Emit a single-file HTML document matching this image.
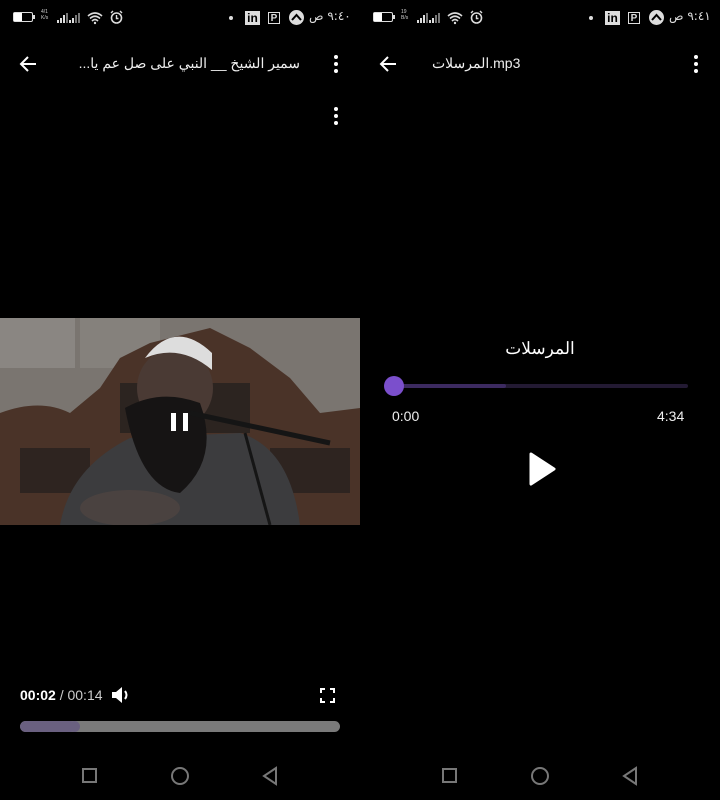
<!DOCTYPE html>
<html><head><meta charset="utf-8">
<style>
*{margin:0;padding:0;box-sizing:border-box}
body{width:720px;height:800px;background:#000;position:relative;overflow:hidden;font-family:"Liberation Sans","Noto Sans CJK SC",sans-serif;color:#fff}
.a{position:absolute}
.half{position:absolute;top:0;width:360px;height:800px}
.clk{font-size:12px;color:#ddd;font-family:'DejaVu Sans',sans-serif;direction:ltr;unicode-bidi:isolate}
.clk span{display:inline-block}
</style></head><body>

<!-- LEFT -->
<div class="half" style="left:0">
  <div class="a" style="left:13px;top:12px;width:20px;height:10px;border:1.5px solid #ddd;border-radius:2px"><div style="width:8px;height:100%;background:#fff"></div></div>
  <div class="a" style="left:33px;top:15px;width:2px;height:4px;background:#ddd"></div>
  <div class="a" style="left:41px;top:9px;font-size:5px;color:#ccc;line-height:6px">4/1<br>K/s</div>
  <svg class="a" style="left:57px;top:11px" width="50" height="14"><g fill="#ddd"><rect x="0" y="9" width="2" height="3"/><rect x="3" y="7" width="2" height="5"/><rect x="6" y="4" width="2" height="8"/><rect x="9" y="2" width="2" height="10" fill="#777"/><rect x="12" y="9" width="2" height="3"/><rect x="15" y="7" width="2" height="5"/><rect x="18" y="4" width="2" height="8" fill="#777"/><rect x="21" y="2" width="2" height="10" fill="#777"/></g>
  <path d="M31 5 Q38 -1 45 5 M33 7.5 Q38 3 43 7.5 M35 10 Q38 7 41 10" stroke="#ddd" stroke-width="1.6" fill="none"/><circle cx="38" cy="12" r="1.2" fill="#ddd"/></svg>
  <svg class="a" style="left:109px;top:10px" width="15" height="15"><circle cx="7.5" cy="8" r="5" stroke="#ddd" stroke-width="1.6" fill="none"/><path d="M7.5 5v3.5h2M2 3l2-2M13 3l-2-2" stroke="#ddd" stroke-width="1.4" fill="none"/></svg>
  <div class="a" style="left:229px;top:16px;width:4px;height:4px;border-radius:50%;background:#ddd"></div>
  <div class="a" style="left:245px;top:11px;width:15px;height:14px;background:#ddd;color:#000;font-weight:bold;font-size:12px;line-height:14px;text-align:center">in</div>
  <div class="a" style="left:268px;top:12px;width:12px;height:12px;border:1px solid #ddd;background:#000;font-size:10px;font-weight:bold;line-height:11px;text-align:center;color:#ddd">P</div>
  <div class="a" style="left:289px;top:10px;width:15px;height:15px;border-radius:50%;background:#ddd"><svg width="15" height="15"><path d="M3 10 L7.5 5 L12 10" stroke="#000" stroke-width="2" fill="none"/></svg></div>
  <div class="a clk" style="left:309px;top:9px"><span>ص</span> <span>٩:٤٠</span></div>
  <svg class="a" style="left:18px;top:54px" width="20" height="20"><path d="M18 10H3M10 3L3 10l7 7" stroke="#fff" stroke-width="2" fill="none"/></svg>
  <div class="a" style="left:50px;top:55px;font-size:14px;direction:rtl;width:250px;text-align:right;color:#eee">سمير الشيخ __ النبي على صل عم يا...</div>
  <svg class="a" style="left:332px;top:54px" width="8" height="20"><circle cx="4" cy="3" r="2" fill="#fff"/><circle cx="4" cy="10" r="2" fill="#fff"/><circle cx="4" cy="17" r="2" fill="#fff"/></svg>
  <svg class="a" style="left:332px;top:106px" width="8" height="20"><circle cx="4" cy="3" r="2" fill="#fff"/><circle cx="4" cy="10" r="2" fill="#fff"/><circle cx="4" cy="17" r="2" fill="#fff"/></svg>
  <svg class="a" style="left:0;top:318px" width="360" height="207">
    <rect width="360" height="207" fill="#7a7570"/>
    <rect x="0" y="0" width="75" height="50" fill="#8a8682"/>
    <rect x="80" y="0" width="80" height="50" fill="#85817c"/>
    <path d="M0 95 Q40 80 70 95 L100 70 L120 40 L150 25 L210 10 L250 30 L290 60 L320 95 L360 90 L360 207 L0 207Z" fill="#4a3328"/>
    <rect x="20" y="130" width="70" height="45" fill="#2e2420"/>
    <rect x="270" y="130" width="80" height="45" fill="#2e2420"/>
    <rect x="120" y="65" width="130" height="50" fill="#2c2420"/>
    <path d="M60 207 Q70 150 130 120 L240 115 Q290 130 300 207Z" fill="#3c3c3e"/>
    <ellipse cx="175" cy="70" rx="38" ry="40" fill="#4a3a34"/>
    <path d="M145 40 Q175 0 212 35 L212 52 Q180 25 145 40Z" fill="#ddd"/>
    <path d="M125 90 Q160 70 200 85 Q220 140 180 175 Q140 170 125 90Z" fill="#161414"/>
    <ellipse cx="130" cy="190" rx="50" ry="18" fill="#4a4240"/>
    <path d="M190 95 L330 125" stroke="#151515" stroke-width="5"/>
    <path d="M245 115 L270 207" stroke="#151515" stroke-width="3"/>
    <rect x="171" y="95" width="5" height="18" fill="#fff"/><rect x="183" y="95" width="5" height="18" fill="#fff"/>
  </svg>
  <div class="a" style="left:20px;top:687px;font-size:14px"><b>00:02</b> <span style="color:#ccc">/ 00:14</span></div>
  <svg class="a" style="left:111px;top:685px" width="22" height="20"><path d="M1 7h4l6-5v16l-6-5H1z" fill="#fff"/><path d="M14 6q3 4 0 8" stroke="#fff" stroke-width="2" fill="none"/></svg>
  <svg class="a" style="left:320px;top:688px" width="15" height="15"><path d="M1 5V1h4M10 1h4v4M14 10v4h-4M5 14H1v-4" stroke="#fff" stroke-width="2" fill="none"/></svg>
  <div class="a" style="left:20px;top:721px;width:320px;height:11px;border-radius:6px;background:#7a7a7a;overflow:hidden"><div style="width:56px;height:100%;background:#6a6080;border-radius:6px"></div></div>
  <div class="a" style="left:69px;top:721px;width:11px;height:11px;border-radius:50%;background:#6a6080"></div>
  <div class="a" style="left:82px;top:768px;width:15px;height:15px;border:2px solid #777"></div>
  <div class="a" style="left:171px;top:767px;width:18px;height:18px;border:2px solid #777;border-radius:50%"></div>
  <svg class="a" style="left:262px;top:766px" width="16" height="20"><path d="M14 2L2 10l12 8z" stroke="#777" stroke-width="2" fill="none"/></svg>
</div>

<!-- RIGHT -->
<div class="half" style="left:360px">
  <div class="a" style="left:13px;top:12px;width:20px;height:10px;border:1.5px solid #ddd;border-radius:2px"><div style="width:8px;height:100%;background:#fff"></div></div>
  <div class="a" style="left:33px;top:15px;width:2px;height:4px;background:#ddd"></div>
  <div class="a" style="left:41px;top:9px;font-size:5px;color:#ccc;line-height:6px">19<br>B/s</div>
  <svg class="a" style="left:57px;top:11px" width="50" height="14"><g fill="#ddd"><rect x="0" y="9" width="2" height="3"/><rect x="3" y="7" width="2" height="5"/><rect x="6" y="4" width="2" height="8"/><rect x="9" y="2" width="2" height="10" fill="#777"/><rect x="12" y="9" width="2" height="3"/><rect x="15" y="7" width="2" height="5"/><rect x="18" y="4" width="2" height="8" fill="#777"/><rect x="21" y="2" width="2" height="10" fill="#777"/></g>
  <path d="M31 5 Q38 -1 45 5 M33 7.5 Q38 3 43 7.5 M35 10 Q38 7 41 10" stroke="#ddd" stroke-width="1.6" fill="none"/><circle cx="38" cy="12" r="1.2" fill="#ddd"/></svg>
  <svg class="a" style="left:109px;top:10px" width="15" height="15"><circle cx="7.5" cy="8" r="5" stroke="#ddd" stroke-width="1.6" fill="none"/><path d="M7.5 5v3.5h2M2 3l2-2M13 3l-2-2" stroke="#ddd" stroke-width="1.4" fill="none"/></svg>
  <div class="a" style="left:229px;top:16px;width:4px;height:4px;border-radius:50%;background:#ddd"></div>
  <div class="a" style="left:245px;top:11px;width:15px;height:14px;background:#ddd;color:#000;font-weight:bold;font-size:12px;line-height:14px;text-align:center">in</div>
  <div class="a" style="left:268px;top:12px;width:12px;height:12px;border:1px solid #ddd;background:#000;font-size:10px;font-weight:bold;line-height:11px;text-align:center;color:#ddd">P</div>
  <div class="a" style="left:289px;top:10px;width:15px;height:15px;border-radius:50%;background:#ddd"><svg width="15" height="15"><path d="M3 10 L7.5 5 L12 10" stroke="#000" stroke-width="2" fill="none"/></svg></div>
  <div class="a clk" style="left:309px;top:9px"><span>ص</span> <span>٩:٤١</span></div>
  <svg class="a" style="left:18px;top:54px" width="20" height="20"><path d="M18 10H3M10 3L3 10l7 7" stroke="#fff" stroke-width="2" fill="none"/></svg>
  <div class="a" style="left:72px;top:55px;font-size:14px;color:#eee">المرسلات.mp3</div>
  <svg class="a" style="left:332px;top:54px" width="8" height="20"><circle cx="4" cy="3" r="2" fill="#fff"/><circle cx="4" cy="10" r="2" fill="#fff"/><circle cx="4" cy="17" r="2" fill="#fff"/></svg>
  <div class="a" style="left:0;top:339px;width:360px;text-align:center;font-size:17px;color:#fff">المرسلات</div>
  <div class="a" style="left:28px;top:384px;width:300px;height:4px;background:#231a33;border-radius:2px"></div>
  <div class="a" style="left:28px;top:384px;width:118px;height:4px;background:#3c2a60;border-radius:2px"></div>
  <div class="a" style="left:24px;top:376px;width:20px;height:20px;border-radius:50%;background:#7b4fcc"></div>
  <div class="a" style="left:32px;top:408px;font-size:14px;color:#eee">0:00</div>
  <div class="a" style="left:297px;top:408px;font-size:14px;color:#eee">4:34</div>
  <svg class="a" style="left:168px;top:451px" width="30" height="36"><path d="M3 3 L26 18 L3 33Z" fill="#fff" stroke="#fff" stroke-width="3" stroke-linejoin="round"/></svg>
  <div class="a" style="left:82px;top:768px;width:15px;height:15px;border:2px solid #777"></div>
  <div class="a" style="left:171px;top:767px;width:18px;height:18px;border:2px solid #777;border-radius:50%"></div>
  <svg class="a" style="left:262px;top:766px" width="16" height="20"><path d="M14 2L2 10l12 8z" stroke="#777" stroke-width="2" fill="none"/></svg>
</div>
</body></html>
